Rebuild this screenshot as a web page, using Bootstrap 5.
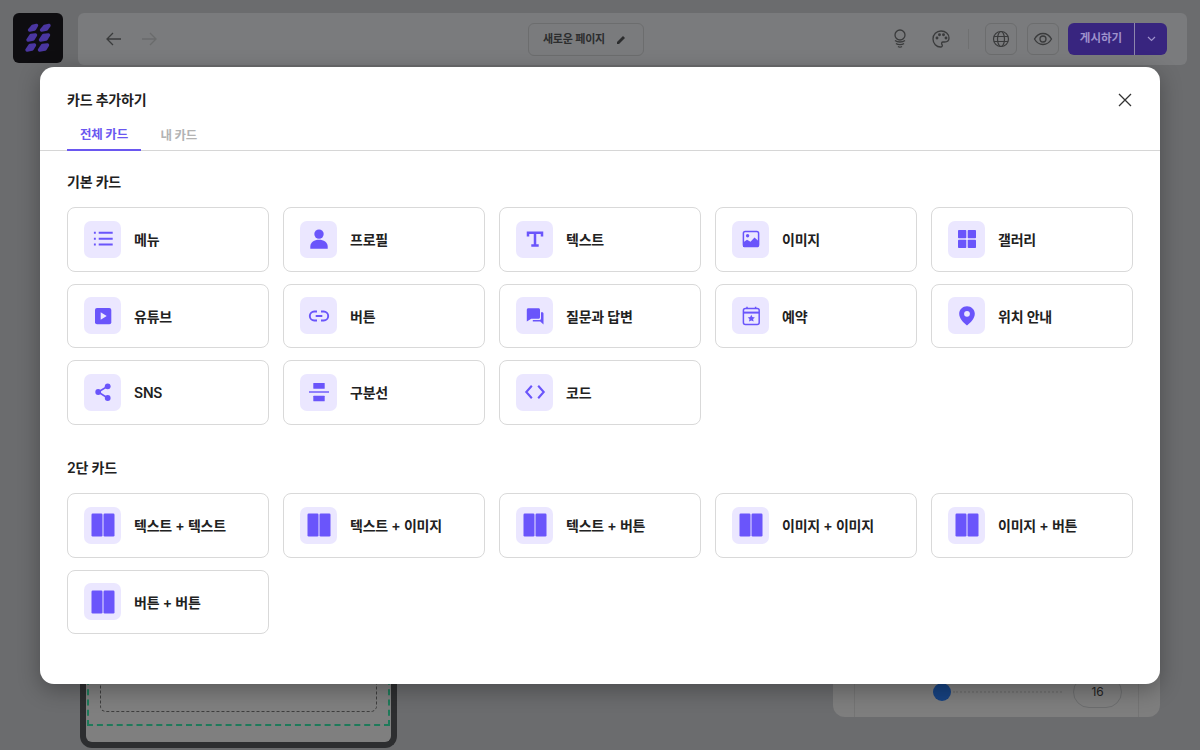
<!DOCTYPE html>
<html lang="ko">
<head>
    <meta charset="UTF-8">
    <meta name="viewport" content="width=device-width, initial-scale=1.0">
    <title>카드 추가하기</title>
    <link href="https://cdn.jsdelivr.net/npm/bootstrap@5.3.0/dist/css/bootstrap.min.css" rel="stylesheet">
    <style>
        body { width: 1200px; height: 750px; overflow: hidden; background: #6b6c6e; font-family: Inter, "Noto Sans CJK KR", sans-serif; color: #212121; }

        /* dimmed editor behind the modal */
        .page-top { padding: 13px 13px 0; gap: 15px; height: 65px; }
        .logo-box { width: 50px; height: 50px; background: #0e0d10; border-radius: 6px; }
        .top-bar { background: #7a7b7d; border-radius: 6px; padding: 0 20px 0 27px; height: 52px; }
        .dim-icon { color: #3a3b3c; }
        .name-btn { width: 116px; height: 33px; border: 1px solid #6c6d6e; border-radius: 6px; font-size: 11px; letter-spacing: -.2px; font-weight: 600; color: #2c2d2e; gap: 11px; margin-left: 370px; padding: 1px 2px 0 0; }
        .tool-sep { width: 1px; height: 20px; background: #6f7071; margin: 0 16px 0 17px; }
        .square-btn { width: 32px; height: 32px; border: 1px solid #6c6d6e; border-radius: 6px; }
        .publish-btn { height: 32px; background: #38257f; border-radius: 6px; color: #9f92cc; font-size: 11.5px; font-weight: 600; margin-left: 9px; }
        .publish-main { width: 67px; border-right: 1px solid #8d86ad; }
        .publish-more { width: 32px; }
        .page-stage { height: 685px; padding: 0 40px 2px 80px; }
        .phone-frame { width: 317px; height: 100px; border: 6px solid #2d2e30; border-top: 0; border-radius: 0 0 12px 12px; background: #7f7f7f; padding: 0 1px 16px; }
        .safe-area { height: 100%; border: 2px dashed #1f7a5a; border-top: 0; padding: 0 11px 12px; }
        .drop-area { height: 100%; border: 1px dashed #3e3e3e; border-top: 0; border-radius: 0 0 6px 6px; }
        .size-panel { width: 327px; height: 60px; margin-bottom: 31px; background: #7e7e7e; border-radius: 0 0 12px 12px; padding: 0 21px; }
        .size-inner { height: 100%; border-left: 1px solid #747474; border-right: 1px solid #747474; padding: 0 16px 9px 78px; gap: 0; }
        .size-knob { width: 18px; height: 18px; background: #174281; border-radius: 50%; flex-shrink: 0; }
        .size-track { width: 112px; border-top: 2px dotted #727272; margin: 0 11px 0 2px; }
        .size-value { width: 50px; height: 32px; border: 1px solid #6c6d6e; border-radius: 16px; font-size: 12px; color: #222; }

        /* modal */
        .add-modal { position: absolute; left: 40px; top: 67px; width: 1120px; height: 617px; border: 0; border-radius: 14px; background: #fff; box-shadow: 0 6px 22px rgba(0, 0, 0, .3); }
        .add-title { font-size: 14px; letter-spacing: -.2px; line-height: 18px; font-weight: 600; margin: 24px 0 9px 27px; }
        .close-x { position: absolute; top: 26px; right: 28px; width: 14px; height: 14px; padding: 0; border: 0; background: none; line-height: 0; }
        .add-tabs { height: 33px; padding-left: 27px; border-bottom: 1px solid #d6d6d6; gap: 6px; }
        .add-tab { height: 33px; padding: 3px 13.5px 0 13px; font-size: 12.5px; letter-spacing: -.2px; font-weight: 700; color: #b3b3b3; text-decoration: none; display: flex; align-items: center; }
        .add-tab.active { color: #6a57f0; border-bottom: 2px solid #6a57f0; }
        .add-body { padding: 21px 27px 0; }
        .group-title { font-size: 14px; letter-spacing: -.2px; line-height: 20px; font-weight: 600; margin-bottom: 15px; }
        .group-title.second { margin-top: 33.5px; }
        .item-grid { display: grid; grid-template-columns: repeat(5, 202px); grid-auto-rows: 64.5px; gap: 12px 14px; }
        .item-box { border: 1px solid #d9d9d9; border-radius: 8px; padding-left: 16px; gap: 13px; font-size: 14px; letter-spacing: -.2px; font-weight: 600; background: #fff; }
        .item-box span { padding-top: 1px; }
        .item-tile { width: 37px; height: 37px; border-radius: 7px; background: #ebe7ff; color: #6a55fb; flex-shrink: 0; }
    </style>
</head>
<body>
    <svg width="0" height="0" class="position-absolute">
        <symbol id="two-col" viewBox="0 0 24 24">
            <rect x="0.5" y="0.5" width="11" height="23" rx="1.2" fill="currentColor"/>
            <rect x="12.5" y="0.5" width="11" height="23" rx="1.2" fill="currentColor"/>
        </symbol>
    </svg>

    <!-- 뒤쪽 에디터 화면 -->
    <div class="page-top d-flex">
        <div class="logo-box d-flex align-items-center justify-content-center">
            <svg width="28" height="30" viewBox="0 0 28 30" fill="#4a36a0" stroke="#4a36a0" stroke-width="3.400" stroke-linejoin="round">
                <path d="M5.500 7 8.500 3.500 12.500 2.500 10.500 6Z"/>
                <path d="M17.500 7 20.500 3.500 25 2.500 22.500 6Z"/>
                <path d="M4 17 7 12.500 11.500 12 9 16Z"/>
                <path d="M16.500 17 19.500 12.500 24.500 12 22 16Z"/>
                <path d="M3 27 6 22.500 10.500 22 8 26Z"/>
                <path d="M15.500 27 18.500 22.500 23.500 22 21 26Z"/>
            </svg>
        </div>
        <div class="top-bar flex-grow-1 d-flex align-items-center">
            <svg class="dim-icon" width="18" height="18" viewBox="0 0 18 18" fill="none" stroke="currentColor" stroke-width="1.3"><path d="M16 9H2M8 3 2 9l6 6"/></svg>
            <svg style="margin-left:17px" width="18" height="18" viewBox="0 0 18 18" fill="none" stroke="#6a6b6c" stroke-width="1.300"><path d="M2 9h14M10 3l6 6-6 6"/></svg>
            <div class="name-btn d-flex align-items-center justify-content-center">
                <span>새로운 페이지</span>
                <svg width="11" height="11" viewBox="0 0 11 11" fill="#2c2d2e"><path d="M1 10V8l6-6 2 2-6 6H1Z"/></svg>
            </div>
            <svg class="dim-icon ms-auto" style="margin-right:2px" width="20" height="22" viewBox="0 0 20 22" fill="none" stroke="currentColor" stroke-width="1.300"><circle cx="10" cy="7" r="5"/><path d="M5 12.500c2.500 2 7.500 2 10 0M6 15.500c2 1.500 6 1.500 8 0M8 18.500c1 .7 3 .7 4 0"/></svg>
            <svg class="dim-icon" style="margin-left:19px" width="20" height="20" viewBox="0 0 20 20" fill="none" stroke="currentColor" stroke-width="1.300"><path d="M10 2c4.500 0 8 3 8 7 0 2.500-2 4-4.500 4H12c-1.500 0-1.800 1.500-1 2.500s.2 2.500-1.500 2.500C5.500 18 2 14.500 2 10s3.500-8 8-8Z"/><circle cx="6" cy="9" r=".8" fill="currentColor"/><circle cx="8.500" cy="5.800" r=".8" fill="currentColor"/><circle cx="12.500" cy="5.800" r=".8" fill="currentColor"/><circle cx="15" cy="9" r=".8" fill="currentColor"/></svg>
            <div class="tool-sep"></div>
            <div class="square-btn d-flex align-items-center justify-content-center">
                <svg class="dim-icon" width="18" height="18" viewBox="0 0 18 18" fill="none" stroke="currentColor" stroke-width="1.200"><circle cx="9" cy="9" r="7.500"/><ellipse cx="9" cy="9" rx="3.500" ry="7.500"/><path d="M2 6.500h14M2 11.500h14"/></svg>
            </div>
            <div class="square-btn d-flex align-items-center justify-content-center" style="margin-left:10px">
                <svg class="dim-icon" width="20" height="16" viewBox="0 0 20 16" fill="none" stroke="currentColor" stroke-width="1.300"><path d="M1.500 8C3.500 4.500 6.500 2.500 10 2.500s6.500 2 8.500 5.500c-2 3.500-5 5.500-8.500 5.500S3.500 11.500 1.500 8Z"/><circle cx="10" cy="8" r="3"/></svg>
            </div>
            <div class="publish-btn d-flex">
                <div class="publish-main d-flex align-items-center justify-content-center">게시하기</div>
                <div class="publish-more d-flex align-items-center justify-content-center">
                    <svg width="9" height="6" viewBox="0 0 9 6" fill="none" stroke="#9f92cc" stroke-width="1.200"><path d="m1 1 3.500 3.500L8 1"/></svg>
                </div>
            </div>
        </div>
    </div>
    <div class="page-stage d-flex justify-content-between align-items-end">
        <div class="phone-frame">
            <div class="safe-area"><div class="drop-area"></div></div>
        </div>
        <div class="size-panel">
            <div class="size-inner d-flex align-items-end">
                <div class="d-flex align-items-center w-100">
                    <div class="size-knob"></div>
                    <div class="size-track"></div>
                    <div class="size-value d-flex align-items-center justify-content-center">16</div>
                </div>
            </div>
        </div>
    </div>

    <!-- 카드 추가 모달 -->
    <div class="modal-content add-modal">
        <div class="add-title">카드 추가하기</div>
        <button type="button" class="close-x" aria-label="닫기">
            <svg width="14" height="14" viewBox="0 0 14 14" fill="none" stroke="#333" stroke-width="1.300"><path d="m1 1 12 12M13 1 1 13"/></svg>
        </button>
        <div class="add-tabs d-flex">
            <a href="#" class="add-tab active">전체 카드</a>
            <a href="#" class="add-tab">내 카드</a>
        </div>

        <div class="add-body">
            <div class="group-title">기본 카드</div>
            <div class="item-grid">
                <div class="item-box d-flex align-items-center">
                    <div class="item-tile d-flex align-items-center justify-content-center">
                        <svg width="24" height="24" viewBox="0 0 24 24" fill="none" stroke="currentColor" stroke-width="2"><path d="M7.700 5.800h14M7.700 11.700h14M7.700 17.500h14"/><path d="M2.900 5.800h1.900M2.900 11.700h1.900M2.900 17.500h1.900"/></svg>
                    </div>
                    <span>메뉴</span>
                </div>
                <div class="item-box d-flex align-items-center">
                    <div class="item-tile d-flex align-items-center justify-content-center">
                        <svg width="24" height="24" viewBox="0 0 24 24" fill="currentColor"><circle cx="12" cy="7.100" r="4.700"/><path d="M3.300 21.800v-2.300c0-4 4-6.700 8.700-6.700s8.700 2.700 8.700 6.700v2.300H3.300Z"/></svg>
                    </div>
                    <span>프로필</span>
                </div>
                <div class="item-box d-flex align-items-center">
                    <div class="item-tile d-flex align-items-center justify-content-center">
                        <svg width="24" height="24" viewBox="0 0 24 24" fill="none" stroke="currentColor" stroke-width="2.500"><path d="M5 9.500V5.800h14v3.700M12 5.800v12.700M8.300 18.500h7.400"/></svg>
                    </div>
                    <span>텍스트</span>
                </div>
                <div class="item-box d-flex align-items-center">
                    <div class="item-tile d-flex align-items-center justify-content-center">
                        <svg width="24" height="24" viewBox="0 0 24 24" fill="none"><rect x="4.400" y="4.400" width="15.200" height="15.200" rx="1.800" stroke="currentColor" stroke-width="1.500"/><circle cx="8.600" cy="8.700" r="1.700" fill="currentColor"/><path d="M4 20v-4.500l4-2.800 3.500 2 4-4.200 4.500 4V18a2 2 0 0 1-2 2H4Z" fill="currentColor"/></svg>
                    </div>
                    <span>이미지</span>
                </div>
                <div class="item-box d-flex align-items-center">
                    <div class="item-tile d-flex align-items-center justify-content-center">
                        <svg width="24" height="24" viewBox="0 0 24 24" fill="currentColor"><rect x="3" y="3" width="8.300" height="8.300" rx=".8"/><rect x="12.700" y="3" width="8.300" height="8.300" rx=".8"/><rect x="3" y="12.700" width="8.300" height="8.300" rx=".8"/><rect x="12.700" y="12.700" width="8.300" height="8.300" rx=".8"/></svg>
                    </div>
                    <span>갤러리</span>
                </div>

                <div class="item-box d-flex align-items-center">
                    <div class="item-tile d-flex align-items-center justify-content-center">
                        <svg width="24" height="24" viewBox="0 0 24 24"><rect x="4" y="3.900" width="16.300" height="16.300" rx="2" fill="currentColor"/><path d="M9.700 8.300v7.500l6-3.750-6-3.750Z" fill="#ebe7ff"/></svg>
                    </div>
                    <span>유튜브</span>
                </div>
                <div class="item-box d-flex align-items-center">
                    <div class="item-tile d-flex align-items-center justify-content-center">
                        <svg width="24" height="24" viewBox="0 0 24 24" fill="none" stroke="currentColor" stroke-width="1.900"><path d="M10 7.500H7.300a4.500 4.500 0 0 0 0 9H10M14 7.500h2.700a4.500 4.500 0 0 1 0 9H14M8.700 12h6.600"/></svg>
                    </div>
                    <span>버튼</span>
                </div>
                <div class="item-box d-flex align-items-center">
                    <div class="item-tile d-flex align-items-center justify-content-center">
                        <svg width="24" height="24" viewBox="0 0 24 24" fill="currentColor"><path d="M5.300 4.200h10.200c.9 0 1.500.7 1.500 1.500v7.600c0 .9-.6 1.500-1.500 1.500H8.300L3.800 17.500V5.700c0-.8.600-1.500 1.500-1.500Z"/><path d="M18 8.300h1.200c.8 0 1.300.6 1.300 1.400v10.800l-3.300-3H9.800V16h6.700c.9 0 1.500-.6 1.500-1.500V8.300Z"/></svg>
                    </div>
                    <span>질문과 답변</span>
                </div>
                <div class="item-box d-flex align-items-center">
                    <div class="item-tile d-flex align-items-center justify-content-center">
                        <svg width="24" height="24" viewBox="0 0 24 24" fill="none"><rect x="4.400" y="4.600" width="15.800" height="15.800" rx="2" stroke="currentColor" stroke-width="1.500"/><path d="M4.400 8.600h15.800" stroke="currentColor" stroke-width="2"/><path d="M8 2.800v2M16.600 2.800v2" stroke="currentColor" stroke-width="1.500"/><path d="m12.300 10.800 1.100 2.300 2.500.3-1.800 1.700.5 2.500-2.300-1.200-2.300 1.200.5-2.500-1.800-1.700 2.500-.3 1.100-2.300Z" fill="currentColor"/></svg>
                    </div>
                    <span>예약</span>
                </div>
                <div class="item-box d-flex align-items-center">
                    <div class="item-tile d-flex align-items-center justify-content-center">
                        <svg width="24" height="24" viewBox="0 0 24 24"><path d="M12 2.200c4.300 0 7.800 3.300 7.800 7.500 0 4.500-4 8.800-7.800 11.800-3.800-3-7.800-7.300-7.800-11.800 0-4.200 3.500-7.500 7.800-7.500Z" fill="currentColor"/><circle cx="12" cy="9.800" r="2.900" fill="#ebe7ff"/></svg>
                    </div>
                    <span>위치 안내</span>
                </div>

                <div class="item-box d-flex align-items-center">
                    <div class="item-tile d-flex align-items-center justify-content-center">
                        <svg width="24" height="24" viewBox="0 0 24 24" fill="currentColor"><circle cx="16.700" cy="6.300" r="2.900"/><circle cx="7.200" cy="12" r="2.900"/><circle cx="16.700" cy="18" r="2.900"/><path d="M16.700 6.300 7.200 12l9.500 6" fill="none" stroke="currentColor" stroke-width="1.600"/></svg>
                    </div>
                    <span>SNS</span>
                </div>
                <div class="item-box d-flex align-items-center">
                    <div class="item-tile d-flex align-items-center justify-content-center">
                        <svg width="24" height="24" viewBox="0 0 24 24" fill="currentColor"><rect x="6.300" y="3" width="11.400" height="5.700" rx=".5"/><rect x="2" y="11.300" width="20" height="1.400"/><rect x="6.300" y="15.800" width="11.400" height="5.500" rx=".5"/></svg>
                    </div>
                    <span>구분선</span>
                </div>
                <div class="item-box d-flex align-items-center">
                    <div class="item-tile d-flex align-items-center justify-content-center">
                        <svg width="24" height="24" viewBox="0 0 24 24" fill="none" stroke="currentColor" stroke-width="2.100"><path d="M8.800 5.800 3.300 12l5.500 6.200M15.200 5.800l5.500 6.200-5.500 6.200"/></svg>
                    </div>
                    <span>코드</span>
                </div>
            </div>

            <div class="group-title second">2단 카드</div>
            <div class="item-grid">
                <div class="item-box d-flex align-items-center">
                    <div class="item-tile d-flex align-items-center justify-content-center"><svg width="24" height="24"><use href="#two-col"/></svg></div>
                    <span>텍스트 + 텍스트</span>
                </div>
                <div class="item-box d-flex align-items-center">
                    <div class="item-tile d-flex align-items-center justify-content-center"><svg width="24" height="24"><use href="#two-col"/></svg></div>
                    <span>텍스트 + 이미지</span>
                </div>
                <div class="item-box d-flex align-items-center">
                    <div class="item-tile d-flex align-items-center justify-content-center"><svg width="24" height="24"><use href="#two-col"/></svg></div>
                    <span>텍스트 + 버튼</span>
                </div>
                <div class="item-box d-flex align-items-center">
                    <div class="item-tile d-flex align-items-center justify-content-center"><svg width="24" height="24"><use href="#two-col"/></svg></div>
                    <span>이미지 + 이미지</span>
                </div>
                <div class="item-box d-flex align-items-center">
                    <div class="item-tile d-flex align-items-center justify-content-center"><svg width="24" height="24"><use href="#two-col"/></svg></div>
                    <span>이미지 + 버튼</span>
                </div>
                <div class="item-box d-flex align-items-center">
                    <div class="item-tile d-flex align-items-center justify-content-center"><svg width="24" height="24"><use href="#two-col"/></svg></div>
                    <span>버튼 + 버튼</span>
                </div>
            </div>
        </div>
    </div>

    <script src="https://cdn.jsdelivr.net/npm/bootstrap@5.3.0/dist/js/bootstrap.bundle.min.js"></script>
</body>
</html>
